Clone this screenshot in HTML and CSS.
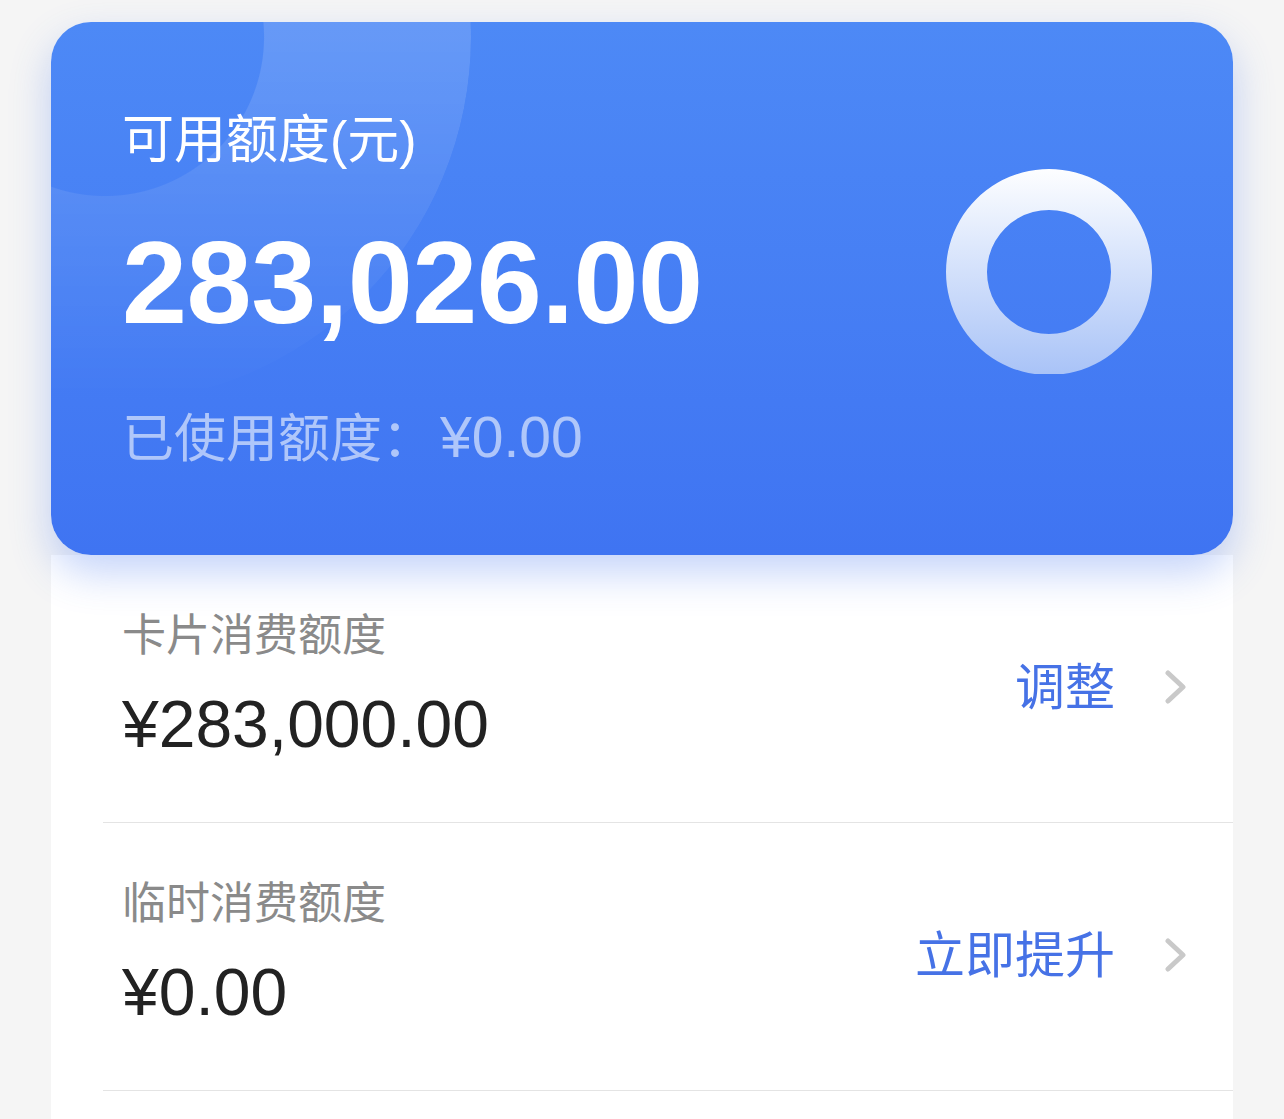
FILE: index.html
```html
<!DOCTYPE html>
<html lang="zh-CN">
<head>
    <meta charset="UTF-8">
    <meta name="viewport" content="width=device-width, initial-scale=1.0">
    <title>额度管理</title>
    <link rel="stylesheet" href="styles.css">
</head>
<body>
    <div class="account">
        <div class="card">
            <div class="card-info">
                <div class="card-title">可用额度(元)</div>
                <div class="card-amount">283,026.00</div>
                <div class="card-used">已使用额度：<span class="card-used-num">¥0.00</span></div>
            </div>
            <div class="card-ring">
                <svg width="206" height="206" viewBox="0 0 206 206">
                    <defs>
                        <linearGradient id="ringFill" x1="0" y1="0" x2="0" y2="1">
                            <stop offset="0" stop-color="#fdfeff"/>
                            <stop offset="1" stop-color="#a9c3f7"/>
                        </linearGradient>
                    </defs>
                    <path fill="url(#ringFill)" fill-rule="evenodd"
                          d="M103 0a103 103 0 1 0 0.01 0z M103 41a62 62 0 1 1 -0.01 0z"/>
                </svg>
            </div>
        </div>

        <div class="limits">
            <div class="limit-row">
                <div class="limit-text">
                    <div class="limit-label">卡片消费额度</div>
                    <div class="limit-value">¥283,000.00</div>
                </div>
                <a class="limit-action" href="#">调整</a>
                <svg class="chevron" width="22" height="34" viewBox="0 0 22 34">
                    <path d="M3 3 L18 17 L3 31" fill="none" stroke="#c9c9c9" stroke-width="5" stroke-linecap="round" stroke-linejoin="round"/>
                </svg>
            </div>
            <div class="limit-row">
                <div class="limit-text">
                    <div class="limit-label">临时消费额度</div>
                    <div class="limit-value">¥0.00</div>
                </div>
                <a class="limit-action" href="#">立即提升</a>
                <svg class="chevron" width="22" height="34" viewBox="0 0 22 34">
                    <path d="M3 3 L18 17 L3 31" fill="none" stroke="#c9c9c9" stroke-width="5" stroke-linecap="round" stroke-linejoin="round"/>
                </svg>
            </div>
        </div>
    </div>
</body>
</html>
```

FILE: styles.css
```css
body {
    margin: 0;
    padding-top: 22px;
    background-color: #f5f5f5;
    font-family: "Liberation Sans", "Noto Sans CJK SC", sans-serif;
    overflow: hidden;
}

.account {
    margin: 0 51px;
}

.card {
    position: relative;
    z-index: 1;
    display: flex;
    justify-content: space-between;
    height: 533px;
    box-sizing: border-box;
    padding: 92px 81px 0 71px;
    border-radius: 40px;
    overflow: hidden;
    background: linear-gradient(180deg, #4d89f6 0%, #3f74f2 100%);
    box-shadow: 0 18px 40px rgba(62, 112, 238, 0.3);
    color: #fff;
}

/* soft light ring in the top left corner */
.card::before {
    content: "";
    position: absolute;
    left: -312px;
    top: -351px;
    width: 732px;
    height: 732px;
    border-radius: 50%;
    background: radial-gradient(circle closest-side, transparent 43.3%, rgba(255, 255, 255, 0.14) 43.6%);
    -webkit-mask-image: linear-gradient(180deg, #000 50%, transparent 100%);
    mask-image: linear-gradient(180deg, #000 50%, transparent 100%);
}

.card-info {
    position: relative;
}

.card-title {
    font-size: 52px;
    line-height: 1;
}

.card-amount {
    margin-top: 58px;
    font-size: 117px;
    font-weight: bold;
    line-height: 1;
    letter-spacing: -0.5px;
}

.card-used {
    margin-top: 68px;
    font-size: 52px;
    line-height: 1;
    color: rgba(255, 255, 255, 0.58);
}

.card-used-num {
    margin-left: 6px;
    font-size: 57px;
}

.card-ring {
    width: 206px;
    height: 205px;
    margin-top: 55px;
    flex-shrink: 0;
    overflow: hidden;
}

.card-ring svg {
    display: block;
}

.limits {
    padding-bottom: 60px;
    background-color: #fff;
}

.limit-row {
    display: flex;
    align-items: center;
    margin-left: 52px;
    padding: 59px 46px 65px 19px;
    border-bottom: 1px solid #e4e4e4;
}

.limit-text {
    flex: 1;
}

.limit-label {
    font-size: 44px;
    line-height: 1;
    color: #8a8a8a;
}

.limit-value {
    margin-top: 33px;
    font-size: 66px;
    line-height: 1;
    color: #222;
}

.limit-action {
    margin-top: 5px;
    margin-right: 50px;
    font-size: 50px;
    line-height: 1;
    color: #4672e6;
    text-decoration: none;
}

.chevron {
    display: block;
    margin-top: 3px;
}
```
